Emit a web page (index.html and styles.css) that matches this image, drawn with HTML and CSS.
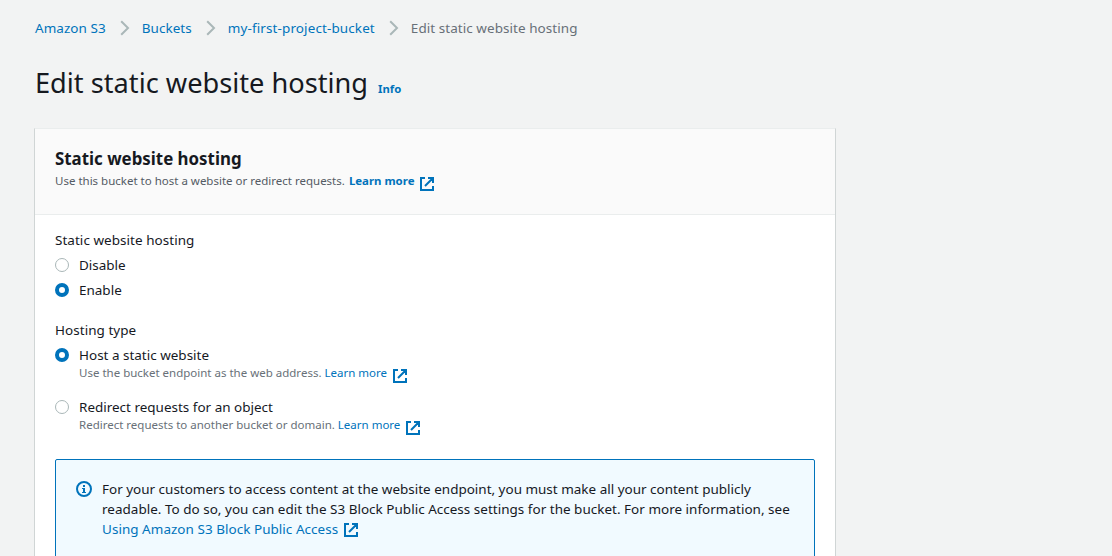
FILE: index.html
```
<!DOCTYPE html>
<html lang="en">
<head>
<meta charset="utf-8">
<title>Edit static website hosting</title>
<link rel="stylesheet" href="styles.css">
</head>
<body>
<svg class="defs" width="0" height="0" aria-hidden="true">
  <symbol id="external" viewBox="0 0 14 14"><path d="M5 1H1v12h12V9M8 1h5v5M13 1L5 9" fill="none" stroke="currentColor" stroke-width="2"/></symbol>
  <symbol id="chevron" viewBox="0 0 10 16"><path d="M1.200 1.200L8 8l-6.800 6.800" fill="none" stroke="currentColor" stroke-width="2"/></symbol>
</svg>
<nav class="breadcrumbs">
  <a>Amazon S3</a><svg class="chevron"><use href="#chevron"/></svg>
  <a>Buckets</a><svg class="chevron"><use href="#chevron"/></svg>
  <a class="bucket-name">my-first-project-bucket</a><svg class="chevron"><use href="#chevron"/></svg>
  <span class="crumb-current">Edit static website hosting</span>
</nav>
<header class="page-header"><h1>Edit static website hosting</h1><a class="info">Info</a></header>
<main class="panel">
  <header class="panel-header">
    <h2>Static website hosting</h2>
    <p class="small"><span>Use this bucket to host a website or redirect requests.</span><a class="learn bold">Learn more</a><svg class="external"><use href="#external"/></svg></p>
  </header>
  <div class="panel-body">
    <div class="label">Static website hosting</div>
    <div class="option"><span class="radio"></span><span>Disable</span></div>
    <div class="option"><span class="radio checked"></span><span>Enable</span></div>
    <div class="label second">Hosting type</div>
    <div class="option"><span class="radio checked"></span><span>Host a static website</span></div>
    <p class="small hint"><span>Use the bucket endpoint as the web address.</span><a class="learn">Learn more</a><svg class="external"><use href="#external"/></svg></p>
    <div class="option redirect"><span class="radio"></span><span>Redirect requests for an object</span></div>
    <p class="small hint"><span>Redirect requests to another bucket or domain.</span><a class="learn">Learn more</a><svg class="external"><use href="#external"/></svg></p>
    <div class="alert">
      <svg class="info-icon" viewBox="0 0 16 16"><circle cx="8" cy="8" r="7" fill="none" stroke="currentColor" stroke-width="2"/><path d="M7 4h2v2H7zM6 7h3v4h1v1H6v-1h1V8H6z" fill="currentColor"/></svg>
      <div class="alert-text">
        <div>For your customers to access content at the website endpoint, you must make all your content publicly</div>
        <div class="line-two">readable. To do so, you can edit the S3 Block Public Access settings for the bucket. For more information, see</div>
        <div class="alert-link"><a>Using Amazon S3 Block Public Access</a><svg class="external"><use href="#external"/></svg></div>
      </div>
    </div>
  </div>
</main>
</body>
</html>
```
FILE: styles.css
```
* { box-sizing: border-box; }
html { height: 100%; overflow: hidden; }
body { display: flex; flex-direction: column; margin: 0; padding-top: 18px; height: 556px; overflow: hidden; background: #f2f3f3; color: #16191f; font: 13.48px/20px "Noto Sans", sans-serif; white-space: nowrap; }
h1, h2, p { margin: 0; }
a { color: #0073bb; }
svg { flex: none; }
.defs { position: absolute; }
.breadcrumbs { display: flex; flex: none; align-items: center; height: 20px; margin-left: 35px; letter-spacing: 0.06px; }
.bucket-name { letter-spacing: 0.12px; }
.chevron { width: 10px; height: 16px; margin: 0 12px 0 14px; color: #aab7b8; }
.crumb-current { color: #687078; }
.page-header { display: flex; flex: none; align-items: baseline; height: 36px; margin: 27px 0 0 35px; }
h1 { font-size: 27.2px; line-height: 36px; font-weight: 400; }
.info { margin-left: 10px; font-size: 11.300px; font-weight: 700; }
.panel { width: 802px; flex: 1; min-height: 0; overflow: hidden; margin: 27px 0 0 34px; border: 1px solid #d0d5d5; border-top-color: #eaeded; border-bottom: 0; background: #fff; }
.panel-header { height: 86px; padding: 18px 20px 0; background: #fafafa; border-bottom: 1px solid #eaeded; }
h2 { font-size: 18px; line-height: 22px; font-weight: 700; transform: scaleX(0.937); transform-origin: left; }
.small { display: flex; height: 20px; margin-top: 2px; color: #545b64; font-size: 11.5px; line-height: 20px; }
.learn { margin-left: 3px; }
.bold { margin-left: 4px; font-size: 11.45px; font-weight: 700; }
.external { width: 14px; height: 14px; margin: 6px 0 0 6px; color: #0073bb; }
.panel-body { padding: 15px 20px 0; }
.label { height: 20px; letter-spacing: 0.05px; }
.second { margin-top: 20px; }
.option { display: flex; align-items: center; height: 20px; margin-top: 5px; }
.radio { width: 14px; height: 14px; margin-right: 10px; border: 1px solid #aab7b8; border-radius: 50%; background: #fff; }
.checked { border: 4.5px solid #0073bb; }
.panel-body .hint { margin: -2px 0 0 24px; color: #687078; }
.redirect { margin-top: 14px; }
.alert { display: flex; height: 110px; margin-top: 24px; padding: 20px; border: 1px solid #0073bb; border-radius: 2px; background: #f1faff; }
.info-icon { width: 16px; height: 16px; margin: 1px 10px 0 0; color: #0073bb; }
.alert-text { margin-top: -1px; }
.line-two { letter-spacing: 0.02px; }
.alert-link { display: flex; letter-spacing: 0.04px; }
.alert-link .external { margin-top: 4px; }
```
